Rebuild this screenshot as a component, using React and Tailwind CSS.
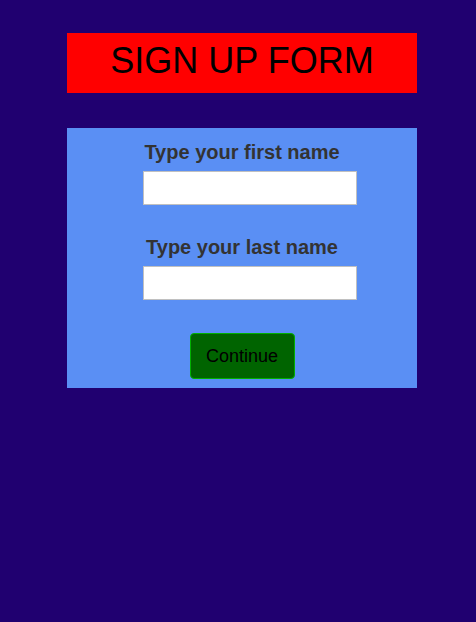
export default function App() {
  return (
    <div className="min-h-[622px] bg-[#200070] pl-[8px] pt-[33px] font-['Liberation_Sans',Arial,sans-serif]">
      <div className="mx-auto flex h-[60px] w-[350px] items-center justify-center bg-[#ff0000]">
        <h1 className="-mt-[5px] text-[36px] leading-none text-black">SIGN UP FORM</h1>
      </div>

      <form className="mx-auto mt-[35px] flex h-[260px] w-[350px] flex-col items-center bg-[#5a8ff4] pt-[13px]">
        <label className="text-[20px] font-bold leading-[23px] text-[#333333]">Type your first name</label>
        <input
          type="text"
          className="ml-[16px] mt-[7px] h-[34px] w-[214px] border border-[#c0c0c0] bg-white outline-none"
        />

        <label className="mt-[31px] text-[20px] font-bold leading-[23px] text-[#333333]">Type your last name</label>
        <input
          type="text"
          className="ml-[16px] mt-[7px] h-[34px] w-[214px] border border-[#c0c0c0] bg-white outline-none"
        />

        <button
          type="button"
          className="mt-[33px] h-[46px] w-[105px] rounded-[4px] border border-[#00b000] bg-[#006400] text-[18px] text-black"
        >
          Continue
        </button>
      </form>
    </div>
  );
}
